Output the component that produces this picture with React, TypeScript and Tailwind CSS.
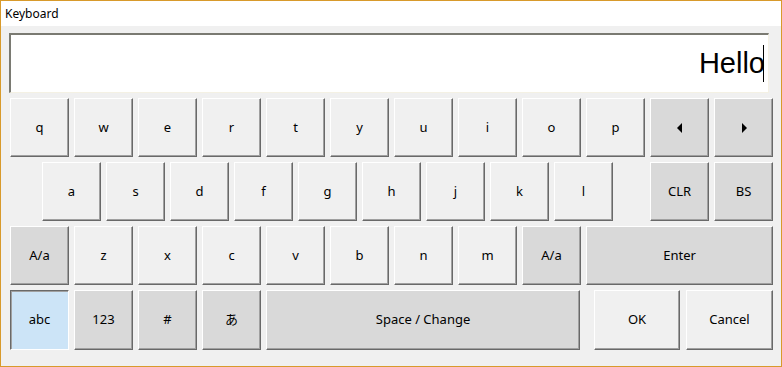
type KeyProps = {
  label?: React.ReactNode;
  w?: string;
  dark?: boolean;
  className?: string;
};

function Key({ label, w = "w-[59px]", dark, className = "" }: KeyProps) {
  return (
    <div
      className={`${w} shrink-0 h-[59px] flex items-center justify-center border-t border-l border-white border-r border-b border-r-[#696969] border-b-[#696969] shadow-[inset_-1px_-1px_0_#a0a0a0] text-[13px] text-black ${
        dark ? "bg-[#d9d9d9]" : "bg-[#f0f0f0]"
      } ${className}`}
    >
      {label}
    </div>
  );
}

function Arrow({ dir }: { dir: "left" | "right" }) {
  return (
    <svg width="6" height="10" viewBox="0 0 6 10">
      {dir === "left" ? (
        <polygon points="5,0 5,10 0,5" fill="#000" />
      ) : (
        <polygon points="1,0 1,10 6,5" fill="#000" />
      )}
    </svg>
  );
}

export default function App() {
  const row1 = ["q", "w", "e", "r", "t", "y", "u", "i", "o", "p"];
  const row2 = ["a", "s", "d", "f", "g", "h", "j", "k", "l"];
  const row3 = ["z", "x", "c", "v", "b", "n", "m"];

  return (
    <div
      className="w-[782px] h-[367px] border border-[#d89a2b] bg-[#f0f0f0] flex flex-col"
      style={{ fontFamily: '"Noto Sans", "Noto Sans CJK JP", sans-serif' }}
    >
      <div className="h-[25px] bg-white flex items-center pl-[4px] text-[12px] text-black">
        Keyboard
      </div>

      <div className="flex flex-col pl-[8px] pt-[7px]">
        <div className="w-[760px] h-[60px] bg-white border-t-2 border-l-2 border-t-[#7a7a72] border-l-[#7a7a72] border-r border-b border-r-[#f4f1e4] border-b-[#f4f1e4] flex items-center justify-end pr-[4px]">
          <span className="text-[29px] leading-none text-black" style={{ fontFamily: '"Liberation Sans", sans-serif' }}>
            Hello
          </span>
          <div className="w-px h-[37px] bg-black -ml-[2px]" />
        </div>

        <div className="flex flex-col gap-[5px] pl-px mt-[5px]">
          <div className="flex gap-[5px]">
            {row1.map((k) => (
              <Key key={k} label={k} />
            ))}
            <Key label={<Arrow dir="left" />} dark />
            <Key label={<Arrow dir="right" />} dark />
          </div>

          <div className="flex gap-[5px] pl-[32px]">
            {row2.map((k) => (
              <Key key={k} label={k} />
            ))}
            <Key label="CLR" dark className="ml-[32px]" />
            <Key label="BS" dark />
          </div>

          <div className="flex gap-[5px]">
            <Key label="A/a" dark />
            {row3.map((k) => (
              <Key key={k} label={k} />
            ))}
            <Key label="A/a" dark />
            <Key label="Enter" dark w="w-[187px]" />
          </div>

          <div className="flex gap-[5px]">
            <div className="w-[59px] shrink-0 h-[60px] flex items-center justify-center bg-[#cce4f7] border-t border-l border-t-[#696969] border-l-[#696969] shadow-[inset_1px_1px_0_#a0a0a0] border-r border-b border-white text-[13px] text-black">
              abc
            </div>
            <Key label="123" dark className="h-[60px]" />
            <Key label="#" dark className="h-[60px]" />
            <Key label="あ" dark className="h-[60px]" />
            <Key label="Space / Change" dark w="w-[314px]" className="h-[60px]" />
            <Key label="OK" w="w-[86px]" className="h-[60px] ml-[9px]" />
            <Key label="Cancel" w="w-[87px]" className="h-[60px] ml-px" />
          </div>
        </div>
      </div>
    </div>
  );
}
